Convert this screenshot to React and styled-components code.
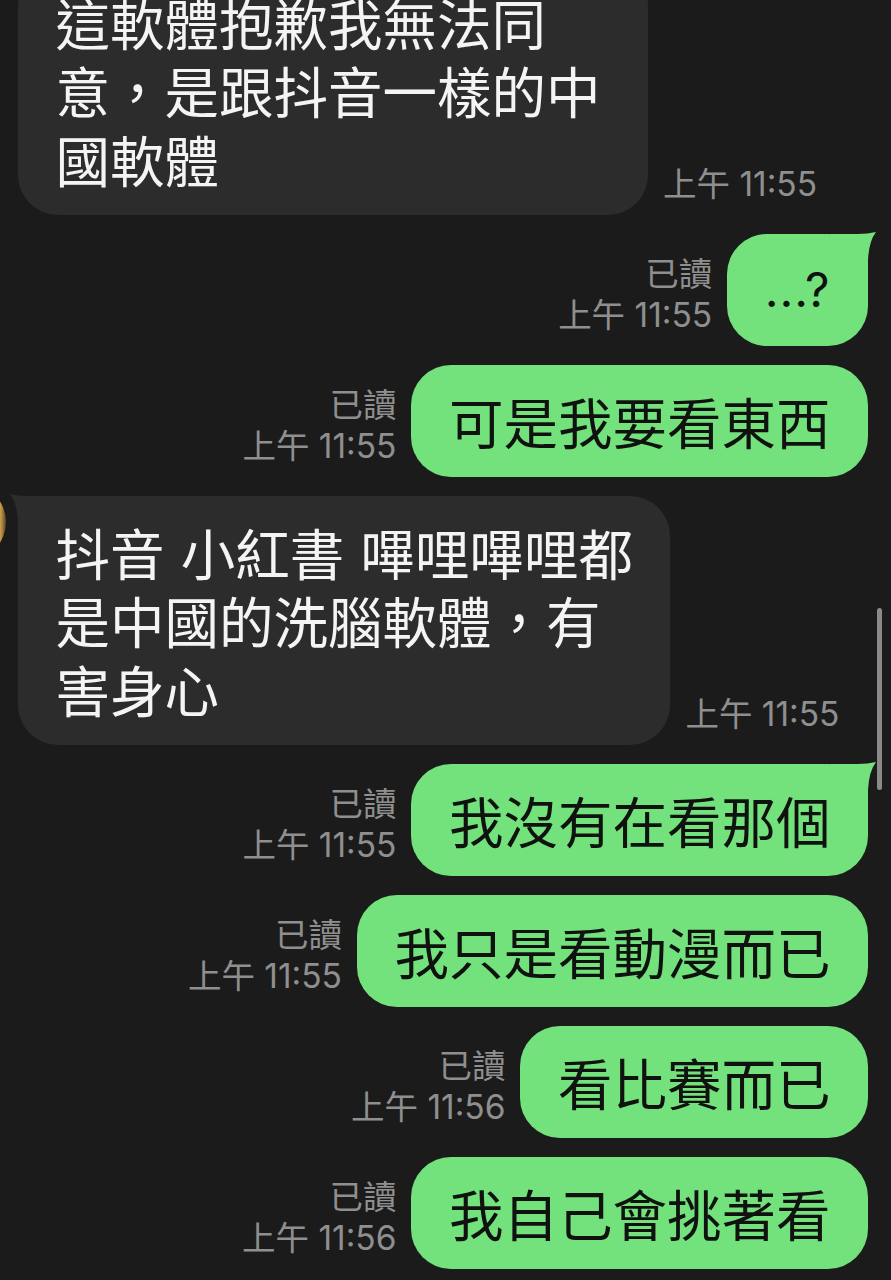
import React from 'react';
import styled, { createGlobalStyle } from 'styled-components';

const GlobalStyle = createGlobalStyle`
  html, body {
    margin: 0;
    padding: 0;
    background: #1b1b1b;
    overflow: hidden;
  }
`;

const Screen = styled.div`
  position: relative;
  width: 891px;
  height: 1280px;
  overflow: hidden;
  background: #1b1b1b;
  font-family: "Noto Sans CJK TC", "Noto Sans", sans-serif;
`;

const Thread = styled.div`
  display: flex;
  flex-direction: column;
  gap: 19.5px;
  margin-top: -34px;
  padding: 0 23px 0 18px;
`;

const Row = styled.div`
  position: relative;
  display: flex;
  align-items: flex-end;
  flex-direction: ${p => (p.$mine ? 'row-reverse' : 'row')};
  gap: 15px;
`;

const Bubble = styled.div`
  position: relative;
  box-sizing: border-box;
  width: ${p => (p.$width ? `${p.$width}px` : 'auto')};
  padding: 21.5px 37.5px;
  border-radius: 40px;
  background: ${p => (p.$mine ? '#73e27c' : '#2c2c2c')};
  color: ${p => (p.$mine ? '#0f120f' : '#f4f4f4')};
  font-size: 54.5px;
  line-height: 68.5px;
  white-space: nowrap;
`;

const Line = styled.div`
  height: 68.5px;
  word-spacing: ${p => p.$spacing || 0}px;
`;

const Dots = styled.span`
  display: inline-block;
  font-family: "Inter", "Noto Sans", sans-serif;
  font-size: 48px;
  line-height: 68.5px;
  letter-spacing: 1px;
  vertical-align: top;
`;

const TailSvg = styled.svg`
  position: absolute;
  top: -2px;
  ${p => (p.$mine ? 'right: -12px;' : 'left: -12px; transform: scaleX(-1);')}
  width: 50px;
  height: 50px;
`;

const Meta = styled.div`
  display: flex;
  flex-direction: column;
  align-items: ${p => (p.$mine ? 'flex-end' : 'flex-start')};
  margin-bottom: 9.5px;
  color: #8f8f8f;
  font-family: "Inter", "Noto Sans CJK TC", sans-serif;
  font-size: 33.5px;
  line-height: 41px;
  white-space: nowrap;
`;

const Avatar = styled.div`
  position: absolute;
  left: -88px;
  top: -12px;
  width: 76px;
  height: 76px;
  border-radius: 50%;
  background: linear-gradient(90deg, #2b2418 0%, #2b2418 84%, #c79b48 93%, #5a4320 100%);
`;

const Scrollbar = styled.div`
  position: absolute;
  left: 877px;
  top: 608px;
  width: 5px;
  height: 182px;
  border-radius: 3px;
  background: #8a8a8a;
`;

const Tail = ({ mine }) => (
  <TailSvg $mine={mine} viewBox="0 0 50 50">
    <path
      d="M0 2 L28 2 Q38 2 46 0 Q39 9 38 28 L38 50 L0 50 Z"
      fill={mine ? '#73e27c' : '#2c2c2c'}
    />
  </TailSvg>
);

const messages = [
  { id: 1, mine: false, lines: ['這軟體抱歉我無法同', '意，是跟抖音一樣的中', '國軟體'], time: '上午 11:55', width: 630 },
  { id: 2, mine: true, dots: true, lines: ['...?'], time: '上午 11:55', first: true },
  { id: 3, mine: true, lines: ['可是我要看東西'], time: '上午 11:55' },
  { id: 4, mine: false, lines: ['抖音 小紅書 嗶哩嗶哩都', '是中國的洗腦軟體，有', '害身心'], time: '上午 11:55', first: true, spacing: 4 },
  { id: 5, mine: true, lines: ['我沒有在看那個'], time: '上午 11:55', first: true },
  { id: 6, mine: true, lines: ['我只是看動漫而已'], time: '上午 11:55' },
  { id: 7, mine: true, lines: ['看比賽而已'], time: '上午 11:56' },
  { id: 8, mine: true, lines: ['我自己會挑著看'], time: '上午 11:56' },
];

const Message = ({ m }) => (
  <Row $mine={m.mine}>
    {!m.mine && m.first && <Avatar />}
    <Bubble $mine={m.mine} $width={m.width}>
      {m.first && <Tail mine={m.mine} />}
      {m.lines.map((l, i) => (
        <Line key={i} $spacing={m.spacing}>
          {m.dots ? <Dots>{l}</Dots> : l}
        </Line>
      ))}
    </Bubble>
    <Meta $mine={m.mine}>
      {m.mine && <span>已讀</span>}
      <span>{m.time}</span>
    </Meta>
  </Row>
);

export default function App() {
  return (
    <Screen>
      <GlobalStyle />
      <Thread>
        {messages.map(m => (
          <Message key={m.id} m={m} />
        ))}
      </Thread>
      <Scrollbar />
    </Screen>
  );
}
